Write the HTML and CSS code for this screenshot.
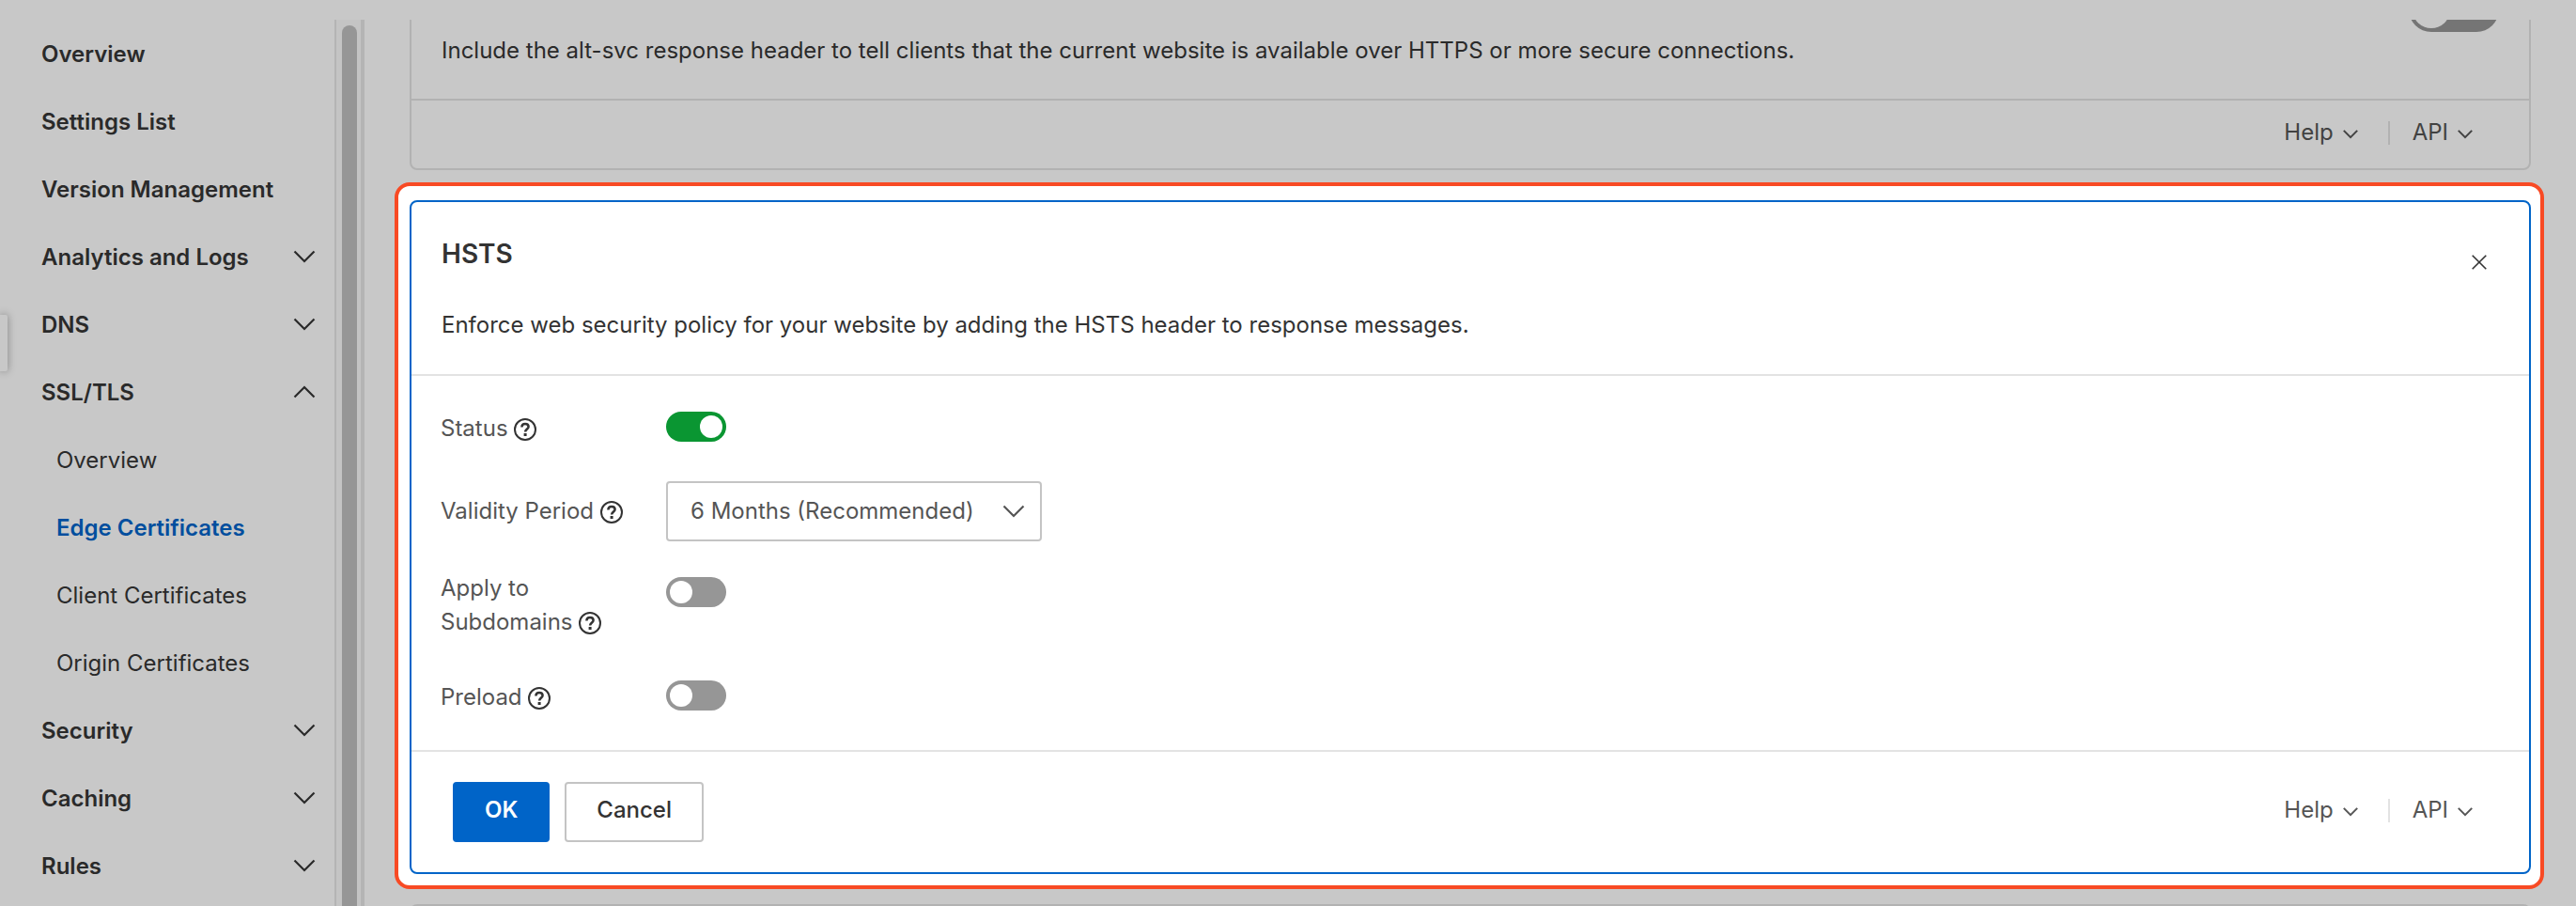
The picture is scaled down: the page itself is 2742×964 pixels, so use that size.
FILE: index.html
```html
<!DOCTYPE html>
<html lang="en">
<head>
    <meta charset="UTF-8">
    <meta name="viewport" content="width=device-width, initial-scale=1.0">
    <title>Edge Certificates</title>
    <link rel="stylesheet" href="styles.css">
</head>
<body>
    <!-- shared icons -->
    <svg class="icon-defs" aria-hidden="true">
        <symbol id="chevron" viewBox="0 0 24 14">
            <path d="M1.5 1.5 L12 12 L22.5 1.5" fill="none" stroke="currentColor" stroke-width="2.2"/>
        </symbol>
        <symbol id="chevron-small" viewBox="0 0 16 10">
            <path d="M.8 .9 L8 8.2 L15.2 .9" fill="none" stroke="currentColor" stroke-width="2"/>
        </symbol>
        <symbol id="question" viewBox="0 0 24 24">
            <circle cx="12" cy="12" r="11" fill="none" stroke="currentColor" stroke-width="2"/>
            <path d="M8.4 9.4 C8.4 7.2 9.9 5.9 12 5.9 C14.1 5.9 15.6 7.2 15.6 9 C15.6 11.4 12.1 11.6 12.1 14.6" fill="none" stroke="currentColor" stroke-width="2.5"/>
            <rect x="10.6" y="16" width="3" height="3" fill="currentColor"/>
        </symbol>
    </svg>

    <button type="button" class="drawer-handle" aria-label="Open drawer"></button>

    <div class="page">
        <nav class="sidebar">
            <ul class="menu">
                <li><a href="#">Overview</a></li>
                <li><a href="#">Settings List</a></li>
                <li><a href="#">Version Management</a></li>
                <li><a href="#">Analytics and Logs <svg class="arrow"><use href="#chevron"/></svg></a></li>
                <li><a href="#">DNS <svg class="arrow"><use href="#chevron"/></svg></a></li>
                <li>
                    <a href="#">SSL/TLS <svg class="arrow up"><use href="#chevron"/></svg></a>
                    <ul class="submenu">
                        <li><a href="#">Overview</a></li>
                        <li><a href="#" class="active">Edge Certificates</a></li>
                        <li><a href="#">Client Certificates</a></li>
                        <li><a href="#">Origin Certificates</a></li>
                    </ul>
                </li>
                <li><a href="#">Security <svg class="arrow"><use href="#chevron"/></svg></a></li>
                <li><a href="#">Caching <svg class="arrow"><use href="#chevron"/></svg></a></li>
                <li><a href="#">Rules <svg class="arrow"><use href="#chevron"/></svg></a></li>
            </ul>
        </nav>
        <div class="scroll-track"><div class="scroll-thumb"></div></div>

        <main class="content">
            <section class="card dimmed">
                <div class="card-head">
                    <p class="desc">Include the alt-svc response header to tell clients that the current website is available over HTTPS or more secure connections.</p>
                    <input type="checkbox" class="switch large" aria-label="Alt-Svc">
                </div>
                <div class="card-foot">
                    <div class="links">
                        <button type="button" class="link">Help <svg class="arrow small"><use href="#chevron-small"/></svg></button>
                        <span class="separator"></span>
                        <button type="button" class="link">API <svg class="arrow small"><use href="#chevron-small"/></svg></button>
                    </div>
                </div>
            </section>

            <div class="highlight">
                <form class="card editing">
                    <div class="card-head">
                        <div>
                            <h2>HSTS</h2>
                            <p class="desc">Enforce web security policy for your website by adding the HSTS header to response messages.</p>
                        </div>
                        <button type="button" class="close" aria-label="Close">
                            <svg viewBox="0 0 16 16"><path d="M.7 .7 L15.3 15.3 M15.3 .7 L.7 15.3" stroke="currentColor" stroke-width="1.6"/></svg>
                        </button>
                    </div>

                    <div class="fields">
                        <div class="field">
                            <label for="status">Status <svg class="question"><use href="#question"/></svg></label>
                            <input type="checkbox" id="status" class="switch" checked>
                        </div>
                        <div class="field middle">
                            <label for="period">Validity Period <svg class="question"><use href="#question"/></svg></label>
                            <div class="select-box">
                                <select id="period">
                                    <option>6 Months (Recommended)</option>
                                </select>
                                <svg class="arrow"><use href="#chevron"/></svg>
                            </div>
                        </div>
                        <div class="field two-line">
                            <label for="subdomains">Apply to<br>Subdomains <svg class="question"><use href="#question"/></svg></label>
                            <input type="checkbox" id="subdomains" class="switch">
                        </div>
                        <div class="field">
                            <label for="preload">Preload <svg class="question"><use href="#question"/></svg></label>
                            <input type="checkbox" id="preload" class="switch">
                        </div>
                    </div>

                    <div class="card-foot">
                        <button type="button" class="btn primary">OK</button>
                        <button type="button" class="btn">Cancel</button>
                        <div class="links">
                            <button type="button" class="link">Help <svg class="arrow small"><use href="#chevron-small"/></svg></button>
                            <span class="separator"></span>
                            <button type="button" class="link">API <svg class="arrow small"><use href="#chevron-small"/></svg></button>
                        </div>
                    </div>
                </form>
            </div>

            <section class="card dimmed next"></section>
        </main>
    </div>
</body>
</html>
```
FILE: styles.css
```css
* {
    box-sizing: border-box;
}
body {
    margin: 0;
    height: 100vh;
    padding-top: 21px;
    overflow: hidden;
    background-color: #c8c8c8;
    color: #2a2a2a;
    font-family: Inter, Roboto, Arial, sans-serif;
    font-size: 24px;
    line-height: 36px;
}
button, select {
    font: inherit;
    color: inherit;
    cursor: pointer;
}
.icon-defs {
    display: none;
}
.page {
    display: flex;
    height: 100%;
}

/* sidebar */
.drawer-handle {
    position: absolute;
    left: 0;
    top: 335px;
    width: 8px;
    height: 60px;
    padding: 0;
    border: none;
    border-radius: 0 2px 2px 0;
    background-color: #c8c8c8;
    box-shadow: 0 0 8px rgba(0, 0, 0, 0.35);
}
.sidebar {
    width: 358px;
    flex-shrink: 0;
    border-right: 2px solid #b4b4b4;
}
.menu, .submenu {
    list-style: none;
    margin: 0;
    padding: 0;
}
.menu {
    padding-top: 1px;
}
.menu a {
    display: flex;
    align-items: center;
    justify-content: space-between;
    height: 72px;
    padding: 0 20px 0 44px;
    color: #2a2a2a;
    font-weight: 600;
    text-decoration: none;
}
.submenu a {
    padding-left: 60px;
    font-weight: 400;
}
.submenu a.active {
    color: #004e9e;
    font-weight: 600;
}
.arrow {
    width: 24px;
    height: 14px;
    margin-bottom: 2px;
}
.arrow.up {
    transform: rotate(180deg);
}
.arrow.small {
    width: 16px;
    height: 10px;
    margin: 4px 0 0;
}
.scroll-track {
    width: 30px;
    flex-shrink: 0;
    padding: 6px 4px 0 6px;
    background-color: #c4c4c4;
    border-right: 4px solid #b4b4b4;
}
.scroll-thumb {
    width: 16px;
    height: 100%;
    border-radius: 8px 8px 0 0;
    background-color: #969696;
}

/* cards */
.content {
    flex: 1;
    overflow: hidden;
    padding: 0 34px 0 32px;
}
.card {
    border: 2px solid #b2b2b2;
    border-radius: 8px;
}
.card-head {
    display: flex;
    justify-content: space-between;
    align-items: flex-start;
    padding: 32px;
}
.card-head h2, .desc {
    margin: 0;
}
.card-head h2 {
    font-size: 28px;
    font-weight: 600;
}
.card-foot {
    display: flex;
    align-items: center;
    gap: 16px;
    padding: 0 60px 0 44px;
    border-top: 2px solid #b2b2b2;
}
/* scrolled partly under the top edge */
.dimmed {
    margin: -69px 14px 0 16px;
}
.dimmed .card-head {
    padding-bottom: 33px;
}
.dimmed .desc {
    margin-top: 50px;
}
.dimmed .card-foot {
    height: 74px;
    color: #424242;
}
.dimmed.next {
    margin-top: 16px;
    height: 80px;
}
.highlight {
    margin-top: 13px;
    padding: 15px 10px 12px 12px;
    border: 4px solid #f84a24;
    border-radius: 16px;
    background-color: #fff;
}
.editing {
    border-color: #0064c8;
    color: #333;
}
.editing .card-head {
    padding: 37px 45px 34px 32px;
}
.editing h2 {
    margin-bottom: 40px;
}
.editing .card-foot {
    height: 130px;
    border-color: #e3e3e3;
}
.close {
    display: flex;
    margin-top: 19px;
    padding: 0;
    border: none;
    background: none;
}
.close svg {
    width: 16px;
    height: 16px;
}

/* help / api */
.links {
    display: flex;
    align-items: center;
    margin: 0 0 4px auto;
}
.link {
    display: flex;
    align-items: center;
    gap: 10px;
    padding: 0;
    border: none;
    background: none;
}
.separator {
    width: 2px;
    height: 25px;
    margin: 0 24px 0 32px;
    background-color: #b2b2b2;
}
.editing .links {
    color: #555;
}
.editing .separator {
    background-color: #e3e3e3;
}

/* form */
.fields {
    display: grid;
    gap: 38px;
    padding: 38px 31px;
    border-top: 2px solid #e3e3e3;
    color: #555;
}
.field {
    display: flex;
    align-items: flex-start;
}
.field.middle {
    align-items: center;
}
.field.two-line {
    height: 72px;
}
.field label {
    width: 240px;
}
.field.two-line label {
    margin-top: -6px;
}
.question {
    width: 24px;
    height: 24px;
    vertical-align: -5px;
    color: #333;
}
.switch {
    appearance: none;
    width: 64px;
    height: 32px;
    margin: 0;
    padding: 4px;
    border-radius: 16px;
    background-color: #969696;
    cursor: pointer;
}
.switch::before {
    content: "";
    display: block;
    width: 24px;
    height: 24px;
    border-radius: 50%;
    background-color: #fff;
}
.switch:checked {
    background-color: #0a9632;
}
.switch:checked::before {
    margin-left: auto;
}
.switch.large {
    width: 96px;
    height: 48px;
    border-radius: 24px;
    background-color: #757575;
}
.switch.large::before {
    width: 40px;
    height: 40px;
    background-color: #c8c8c8;
}
.select-box {
    position: relative;
    width: 400px;
}
.select-box select {
    display: block;
    appearance: none;
    width: 100%;
    height: 64px;
    padding: 0 64px 0 24px;
    border: 2px solid #c4c4c4;
    border-radius: 4px;
    background-color: #fff;
}
.select-box .arrow {
    position: absolute;
    right: 18px;
    top: 25px;
    margin: 0;
    pointer-events: none;
}
.btn {
    height: 64px;
    padding: 0 32px 4px;
    border: 2px solid #c4c4c4;
    border-radius: 4px;
    background-color: #fff;
    font-weight: 500;
}
.btn.primary {
    border-color: #0064c8;
    background-color: #0064c8;
    color: #fff;
    font-weight: 600;
}
```
